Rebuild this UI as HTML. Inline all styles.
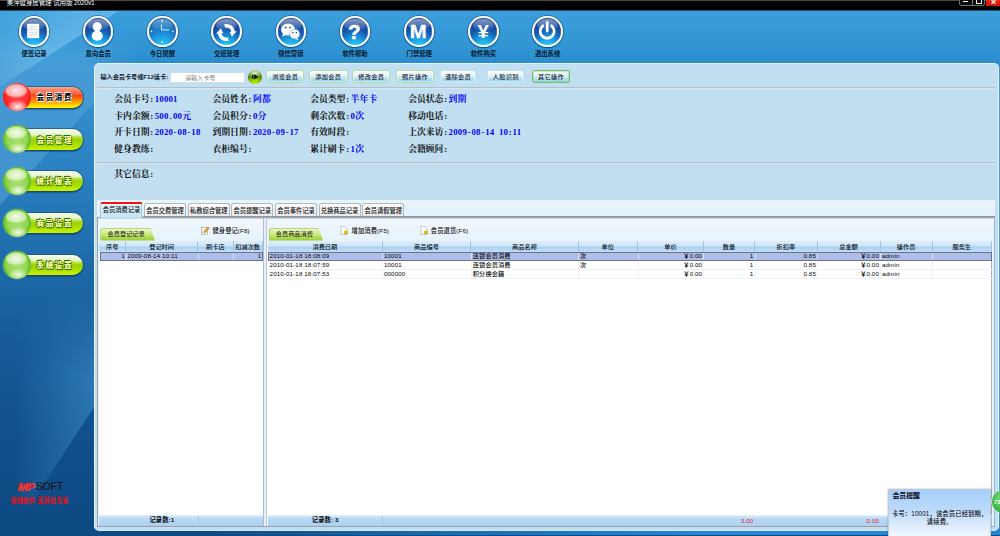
<!DOCTYPE html>
<html lang="zh-CN"><head><meta charset="utf-8"><title>美萍健身房管理 试用版 2020v1</title>
<style>
html,body{margin:0;padding:0}
body{width:1000px;height:536px;overflow:hidden;position:relative;background:#0e4a84;font-family:"Liberation Sans","Noto Sans CJK SC",sans-serif;font-size:6.25px;line-height:1;color:#000}
div,span{box-sizing:border-box}
.a{position:absolute;white-space:nowrap}
#title{left:0;top:0;width:1000px;height:11px;background:linear-gradient(#6a6a6a 0,#000 1.6px,#000 10px,#1b4d6e 10px)}
#tb{left:0;top:11px;width:1000px;height:52px;background:linear-gradient(#3c9fdc,#2f93d3 80%,#2a8ccc)}
#side{left:0;top:63px;width:102px;height:473px;background:linear-gradient(#3a94d2 0,#2b82c2 22%,#1c67a6 45%,#155a97 60%,#104f8a 80%,#0e4a84 100%)}
.ic{width:30.6px;height:30.6px;border-radius:50%;top:5.6px;background:radial-gradient(circle at 50% 102%,#30d2f8 0,#1ea2e6 26%,#1658b0 52%,#0f3888 80%,#0c2e7c 100%);box-shadow:inset 0 0 0 1.8px #fff,inset 0 0 0 2.4px rgba(255,255,255,.35),0 0 0 .7px rgba(8,50,110,.55),0 1px 1.5px rgba(0,30,80,.6)}
.ic:before{content:"";position:absolute;left:4.6px;right:4.6px;top:2.2px;height:11.4px;border-radius:50%/60% 60% 40% 40%;background:linear-gradient(rgba(255,255,255,.5),rgba(255,255,255,.06))}
.ic svg{position:absolute;left:.5px;top:.5px;width:28.4px;height:28.4px}
.il{top:39.6px;width:60px;text-align:center;color:#04162c;font-size:6.3px;font-weight:bold}
#panel{left:93.5px;top:62.8px;width:905px;height:468.6px;background:#c1dff1;border-radius:5px;border:1px solid #e8f4fb;border-bottom-color:#d4e9f7}
.sep{height:1px;background:#b4bfc9;box-shadow:0 1px 0 #d2e8f5}
.lb{font-family:"Liberation Serif","Noto Serif CJK SC",serif;font-weight:bold;font-size:8.8px;color:#101010}
.vl{font-family:"Liberation Serif","Noto Serif CJK SC",serif;font-weight:bold;font-size:8.8px;color:#0000fa;letter-spacing:.2px}
.p{display:inline-block;width:4.5px;text-align:center}
.btn{top:70px;height:13.3px;border-radius:2.5px;border:1px solid #b0e0a2;background:linear-gradient(#fbfefe 0,#e6f5fa 40%,#b6e0f3 70%,#92d3ef 100%);box-shadow:inset 0 0 0 .6px rgba(255,255,255,.75);text-align:center;line-height:11.6px;font-size:6.2px;font-weight:500;letter-spacing:.3px;color:#14222e}
.tab{top:203px;height:13.4px;width:42px;border:1px solid #b4b8bd;border-bottom:none;border-radius:2.5px 2.5px 0 0;background:linear-gradient(#fff,#f4f5f6 60%,#e6e8ea);text-align:center;line-height:13.4px;font-size:6.25px;color:#0c0c0c;font-weight:500}
.hd{top:240.6px;height:11px;background:linear-gradient(#deeefb,#cfe5f8 45%,#a9d0f1 55%,#c4e0f7);border-right:1px solid #9fc3e4;text-align:center;line-height:11.2px;font-size:6.2px;color:#06121e;font-weight:500}
.c{font-size:6.2px;color:#0a0a0a;font-weight:500;height:8.8px;line-height:8.8px}
.ft{top:514.6px;height:11.4px;background:linear-gradient(#e6f2fc 0,#bbdaf6 28%,#aad1f4 100%);line-height:11px;font-size:6.2px}
.stab{z-index:1;top:228.2px;height:12.4px;text-align:center;line-height:12.9px;font-size:6.2px;color:#111}
.stab:before{content:"";position:absolute;left:0;top:0;right:0;bottom:0;background:linear-gradient(#eaf6c0,#cbe882 45%,#a6d644 80%,#98cc34);border:1px solid #a4cc60;border-bottom:none;border-radius:3.5px 3px 0 0;clip-path:polygon(0 0,92% 0,100% 100%,0 100%);z-index:-1}
.pill{left:14px;width:69px;height:20.4px;border-radius:0 10.2px 10.2px 0;box-shadow:0 0 0 .7px rgba(16,80,120,.85),0 1.2px 1px 0.3px rgba(10,50,90,.8)}
.ball{left:3px;width:28.2px;height:28.2px;border-radius:50%}
.pt{left:34.8px;width:40px;text-align:center;font-weight:900;font-size:7.5px;letter-spacing:1.6px}
.tbt{font-size:6.25px;color:#080808;font-weight:500;letter-spacing:.12px}
</style></head><body>

<div id="title" class="a"></div>
<div class="a" style="left:6.8px;top:0.3px;color:#fff;font-size:6.5px;letter-spacing:-0.12px">美萍健身房管理 试用版 2020v1</div>
<div class="a" style="left:959px;top:-2px;width:26px;height:8.4px;border:0.8px solid #6e6e6e;border-radius:0 0 2px 2px;background:#0c0c0c"></div>
<div class="a" style="left:971.5px;top:0;width:0.7px;height:6px;background:#777"></div>
<div class="a" style="left:963px;top:1px;width:4.8px;height:1.3px;background:#fff"></div>
<div class="a" style="left:976px;top:-1px;width:6px;height:5.4px;border:1px solid #e8e8e8;border-radius:0.5px"></div>
<div class="a" style="left:986px;top:-1px;width:15px;height:6.8px;background:linear-gradient(#f02a1a,#d80f08);color:#fff;font-size:9.5px;font-weight:bold;text-align:center;line-height:5.4px">×</div>
<div id="tb" class="a"></div>
<div id="side" class="a"></div>
<div class="a" style="left:0;top:63px;width:94px;height:145px;background:linear-gradient(rgba(120,190,235,.18),rgba(120,190,235,.34));clip-path:polygon(0 0,100% 0,100% 40px,0 142px)"></div>
<div class="a" style="left:0;top:30px;width:140px;height:33px;background:linear-gradient(rgba(130,195,238,0),rgba(130,195,238,.3));-webkit-mask-image:linear-gradient(to right,#000 60%,transparent);mask-image:linear-gradient(to right,#000 60%,transparent)"></div>
<div class="a" style="left:0;top:11px;width:117.6px;height:76.4px;background:linear-gradient(to bottom right,rgba(150,215,245,.05) 0,rgba(140,210,245,.48) 49.6%,rgba(255,255,255,0) 50.4%);-webkit-mask-image:linear-gradient(to top right,rgba(0,0,0,.35),#000 45%);mask-image:linear-gradient(to top right,rgba(0,0,0,.35),#000 45%)"></div>
<div class="a" style="left:0;top:290px;width:94px;height:215px;background:linear-gradient(to right,rgba(70,150,205,0) 15%,rgba(70,155,210,.5) 100%);clip-path:polygon(0 0,100% 0,100% 117px,32% 215px,0 215px);-webkit-mask-image:linear-gradient(transparent,#000 40%);mask-image:linear-gradient(transparent,#000 40%)"></div>
<div class="a ic" style="left:18.7px;top:16.4px"><svg viewBox="0 0 28.4 28.4"><rect x="8.2" y="6.8" width="12" height="14.4" fill="#fff"/><path d="M10 10h8.4M10 12.6h8.4M10 15.2h8.4M10 17.8h8.4" stroke="#c2cedc" stroke-width=".8"/></svg></div>
<div class="a il" style="left:4.0px;top:50.7px">便签记录</div>
<div class="a ic" style="left:82.9px;top:16.4px"><svg viewBox="0 0 28.4 28.4"><circle cx="14.2" cy="9.8" r="4.5" fill="#fff"/><ellipse cx="14.2" cy="18.8" rx="5.5" ry="5" fill="#fff"/></svg></div>
<div class="a il" style="left:68.2px;top:50.7px">意向会员</div>
<div class="a ic" style="left:147.1px;top:16.4px"><svg viewBox="0 0 28.4 28.4"><circle cx="14.2" cy="14.4" r="12.6" fill="#28b4ee" opacity=".38"/><path d="M13.4 7.4v5.6h8" stroke="#c4f4fc" stroke-width="1" fill="none"/><rect x="13.6" y="2.6" width="1.1" height="2.4" fill="#e8fbff"/><circle cx="14.2" cy="25.2" r=".9" fill="#e8fbff"/><circle cx="3.5" cy="14.4" r=".8" fill="#e8fbff"/><circle cx="24.9" cy="14.4" r=".8" fill="#e8fbff"/></svg></div>
<div class="a il" style="left:132.4px;top:50.7px">今日提醒</div>
<div class="a ic" style="left:211.3px;top:16.4px"><svg viewBox="0 0 28.4 28.4"><g transform="translate(.2 1.1)"><path d="M12.44 7.83A6.8 6.8 0 0 1 20.97 13.81" stroke="#fff" stroke-width="3.5" fill="none"/><path d="M15.96 20.97A6.8 6.8 0 0 1 7.43 14.99" stroke="#fff" stroke-width="3.5" fill="none"/><path d="M19.77 18.6L17.3 13.6 24.6 13.2z" fill="#fff"/><path d="M8.63 10.2L11.1 15.2 3.8 15.6z" fill="#fff"/></g></svg></div>
<div class="a il" style="left:196.6px;top:50.7px">交班管理</div>
<div class="a ic" style="left:275.5px;top:16.4px"><svg viewBox="0 0 28.4 28.4"><ellipse cx="12" cy="12.4" rx="7" ry="6" fill="#fff"/><path d="M7.4 16.2l-1.4 3.6 4.6-2z" fill="#fff"/><ellipse cx="18.7" cy="17" rx="5.1" ry="4.8" fill="#fff" stroke="#5a94d4" stroke-width=".5"/><path d="M20.8 20.8l1.8 2.2-3.8-1z" fill="#fff"/><circle cx="9.8" cy="10.6" r=".85" fill="#1c3c78"/><circle cx="14" cy="10.6" r=".85" fill="#1c3c78"/><circle cx="16.9" cy="15.4" r=".75" fill="#1c3c78"/><circle cx="20.4" cy="15.4" r=".75" fill="#1c3c78"/></svg></div>
<div class="a il" style="left:260.8px;top:50.7px">微信营销</div>
<div class="a ic" style="left:339.7px;top:16.4px"><svg viewBox="0 0 28.4 28.4"><text x="14.2" y="21.6" font-family="Liberation Sans,sans-serif" font-weight="bold" font-size="20.5" fill="#fff" stroke="#fff" stroke-width=".5" text-anchor="middle">?</text></svg></div>
<div class="a il" style="left:325.0px;top:50.7px">软件帮助</div>
<div class="a ic" style="left:403.9px;top:16.4px"><svg viewBox="0 0 28.4 28.4"><text transform="translate(14.2 20.6) scale(1.16 1)" font-family="Liberation Sans,sans-serif" font-weight="bold" font-size="17.5" fill="#fff" stroke="#fff" stroke-width=".3" text-anchor="middle">M</text></svg></div>
<div class="a il" style="left:389.2px;top:50.7px">门禁管理</div>
<div class="a ic" style="left:468.1px;top:16.4px"><svg viewBox="0 0 28.4 28.4"><text transform="translate(14.2 21) scale(1.1 1)" font-family="Liberation Sans,sans-serif" font-weight="bold" font-size="18.5" fill="#fff" text-anchor="middle">¥</text></svg></div>
<div class="a il" style="left:453.4px;top:50.7px">软件购买</div>
<div class="a ic" style="left:532.3px;top:16.4px"><svg viewBox="0 0 28.4 28.4"><path d="M9.8 8.8a7 7 0 1 0 8.8 0" stroke="#fff" stroke-width="2.8" fill="none" stroke-linecap="round"/><path d="M14.2 5.6v8.4" stroke="#fff" stroke-width="2.8" stroke-linecap="round"/></svg></div>
<div class="a il" style="left:517.6px;top:50.7px">退出系统</div>
<div class="a pill" style="top:87.2px;background:linear-gradient(#f6a892 0,#ff8e70 10%,#fb6c4a 30%,#f04a16 38%,#f76410 52%,#ffa000 70%,#ffdc00 88%,#fff200 100%)"></div>
<div class="a ball" style="top:83.0px;background:radial-gradient(ellipse 40% 25% at 52% 85%,rgba(255,248,248,.96) 0,rgba(255,190,190,.6) 60%,rgba(255,80,80,0) 100%),radial-gradient(ellipse 44% 27% at 47% 27%,rgba(255,238,238,.95) 0,rgba(255,196,196,.85) 75%,rgba(255,120,120,0) 100%),radial-gradient(circle at 50% 50%,#ff4444 0,#ff3030 50%,#ff1212 72%,#f80404 86%,#c80000 100%);box-shadow:0 0 1.2px .2px rgba(110,200,240,.7)"></div>
<div class="a pt" style="top:94.3px;color:#0a0a0a;text-shadow:0 0 1px #fff,0 0 1px #fff,0 0 1.5px #fff,0.6px 0.6px 0 #fff,-0.6px -0.6px 0 #fff">会员消费</div>
<div class="a pill" style="top:129.4px;background:linear-gradient(#f6fbea 0,#e6f5c8 28%,#bde350 37%,#9ad402 50%,#a6dc00 70%,#ccf200 100%)"></div>
<div class="a ball" style="top:125.2px;background:radial-gradient(ellipse 38% 23% at 54% 85%,rgba(255,255,255,.88) 0,rgba(222,246,198,.5) 60%,rgba(160,220,100,0) 100%),radial-gradient(ellipse 42% 25% at 47% 27%,rgba(255,255,255,.88) 0,rgba(226,246,204,.72) 75%,rgba(180,230,130,0) 100%),radial-gradient(circle at 50% 50%,#a8e074 0,#96d655 50%,#5cba10 72%,#44a400 86%,#2a8600 100%);box-shadow:0 0 1.2px .2px rgba(110,200,240,.7)"></div>
<div class="a pt" style="top:136.5px;color:#ffffa0;text-shadow:0 0 1px #2c6a08,0 0 1px #2c6a08,0 0 1.5px #2c6a08,0.6px 0.6px 0 #2c6a08,-0.6px -0.6px 0 #2c6a08">会员管理</div>
<div class="a pill" style="top:171.1px;background:linear-gradient(#f6fbea 0,#e6f5c8 28%,#bde350 37%,#9ad402 50%,#a6dc00 70%,#ccf200 100%)"></div>
<div class="a ball" style="top:166.9px;background:radial-gradient(ellipse 38% 23% at 54% 85%,rgba(255,255,255,.88) 0,rgba(222,246,198,.5) 60%,rgba(160,220,100,0) 100%),radial-gradient(ellipse 42% 25% at 47% 27%,rgba(255,255,255,.88) 0,rgba(226,246,204,.72) 75%,rgba(180,230,130,0) 100%),radial-gradient(circle at 50% 50%,#a8e074 0,#96d655 50%,#5cba10 72%,#44a400 86%,#2a8600 100%);box-shadow:0 0 1.2px .2px rgba(110,200,240,.7)"></div>
<div class="a pt" style="top:178.2px;color:#ffffa0;text-shadow:0 0 1px #2c6a08,0 0 1px #2c6a08,0 0 1.5px #2c6a08,0.6px 0.6px 0 #2c6a08,-0.6px -0.6px 0 #2c6a08">统计报表</div>
<div class="a pill" style="top:212.9px;background:linear-gradient(#f6fbea 0,#e6f5c8 28%,#bde350 37%,#9ad402 50%,#a6dc00 70%,#ccf200 100%)"></div>
<div class="a ball" style="top:208.7px;background:radial-gradient(ellipse 38% 23% at 54% 85%,rgba(255,255,255,.88) 0,rgba(222,246,198,.5) 60%,rgba(160,220,100,0) 100%),radial-gradient(ellipse 42% 25% at 47% 27%,rgba(255,255,255,.88) 0,rgba(226,246,204,.72) 75%,rgba(180,230,130,0) 100%),radial-gradient(circle at 50% 50%,#a8e074 0,#96d655 50%,#5cba10 72%,#44a400 86%,#2a8600 100%);box-shadow:0 0 1.2px .2px rgba(110,200,240,.7)"></div>
<div class="a pt" style="top:220.0px;color:#ffffa0;text-shadow:0 0 1px #2c6a08,0 0 1px #2c6a08,0 0 1.5px #2c6a08,0.6px 0.6px 0 #2c6a08,-0.6px -0.6px 0 #2c6a08">商品设置</div>
<div class="a pill" style="top:254.7px;background:linear-gradient(#f6fbea 0,#e6f5c8 28%,#bde350 37%,#9ad402 50%,#a6dc00 70%,#ccf200 100%)"></div>
<div class="a ball" style="top:250.5px;background:radial-gradient(ellipse 38% 23% at 54% 85%,rgba(255,255,255,.88) 0,rgba(222,246,198,.5) 60%,rgba(160,220,100,0) 100%),radial-gradient(ellipse 42% 25% at 47% 27%,rgba(255,255,255,.88) 0,rgba(226,246,204,.72) 75%,rgba(180,230,130,0) 100%),radial-gradient(circle at 50% 50%,#a8e074 0,#96d655 50%,#5cba10 72%,#44a400 86%,#2a8600 100%);box-shadow:0 0 1.2px .2px rgba(110,200,240,.7)"></div>
<div class="a pt" style="top:261.8px;color:#ffffa0;text-shadow:0 0 1px #2c6a08,0 0 1px #2c6a08,0 0 1.5px #2c6a08,0.6px 0.6px 0 #2c6a08,-0.6px -0.6px 0 #2c6a08">系统设置</div>
<div class="a" style="left:17.8px;top:480.6px;font-weight:bold;font-style:italic;font-size:11.6px;letter-spacing:-0.5px;color:#f21a10;text-shadow:0 -0.3px .4px #ffb0a0,.3px 0 0 #f21a10">MP</div>
<div class="a" style="left:35.8px;top:481.5px;font-size:10.4px;letter-spacing:-0.12px;color:#120c0c">SOFT</div>
<div class="a" style="left:10.6px;top:497.9px;font-size:6.25px;color:#f40c0c;font-weight:bold">管理软件 美萍是专家</div>
<div class="a" style="left:990px;top:63px;width:10px;height:470px;background:linear-gradient(#2f90d0,#4a9fd8 8%,#4a9fd8 90%,#2a84c8)"></div>
<div id="panel" class="a"></div>
<div class="a tbt" style="left:100.4px;top:73.6px;font-weight:bold;font-size:6.2px;letter-spacing:-0.05px;color:#14202c">输入会员卡号或F12读卡:</div>
<div class="a" style="left:170.3px;top:71.6px;width:75px;height:11.2px;background:#fff;border:1px solid #c9dfee;padding-left:13.6px;line-height:9.6px;font-size:6.1px;color:#7c7c7c">请输入卡号</div>
<div class="a" style="left:248.3px;top:69.9px;width:13.7px;height:13.7px;border-radius:50%;background:radial-gradient(ellipse 62% 36% at 50% 20%,rgba(255,255,255,.85) 0,rgba(255,255,255,.25) 70%,rgba(255,255,255,0) 100%),radial-gradient(circle at 50% 96%,#b8f200 0,#90cc00 30%,#55800a 58%,#5c8a0c 75%,#86b41c 92%,#6e9c14 100%)"><svg viewBox="0 0 13.7 13.7" style="position:absolute;left:0;top:0;width:13.7px;height:13.7px"><path d="M4 4.9h1.5v3.9H4zM6.2 4.2l4.4 2.7-4.4 2.7z" fill="#0a1000"/></svg></div>
<div class="a btn" style="left:266px;width:38.4px;">浏览会员</div>
<div class="a btn" style="left:309px;width:38.5px;">添加会员</div>
<div class="a btn" style="left:352px;width:38.3px;">修改会员</div>
<div class="a btn" style="left:395.7px;width:38.5px;">照片操作</div>
<div class="a btn" style="left:439.6px;width:36.9px;border-color:#c6e4f0;">清除会员</div>
<div class="a btn" style="left:487.3px;width:36.9px;border-color:#c6e4f0;">人脸识别</div>
<div class="a btn" style="left:532px;width:38.0px;border-color:#6fbf6a;box-shadow:inset 0 0 0 .6px #9bd894;">其它操作</div>
<div class="a sep" style="left:97px;top:87.2px;width:898px"></div>
<div class="a sep" style="left:97px;top:161.6px;width:898px"></div>
<div class="a lb" style="left:114.3px;top:95.0px">会员卡号<span class="p">:</span></div>
<div class="a vl" style="left:154.7px;top:95.0px">10001</div>
<div class="a lb" style="left:212.5px;top:95.0px">会员姓名<span class="p">:</span></div>
<div class="a vl" style="left:252.9px;top:95.0px">阿都</div>
<div class="a lb" style="left:310.2px;top:95.0px">会员类型<span class="p">:</span></div>
<div class="a vl" style="left:350.6px;top:95.0px">半年卡</div>
<div class="a lb" style="left:408.2px;top:95.0px">会员状态<span class="p">:</span></div>
<div class="a vl" style="left:448.6px;top:95.0px">到期</div>
<div class="a lb" style="left:114.3px;top:111.5px">卡内余额<span class="p">:</span></div>
<div class="a vl" style="left:154.7px;top:111.5px">500<span class="p">.</span>00元</div>
<div class="a lb" style="left:212.5px;top:111.5px">会员积分<span class="p">:</span></div>
<div class="a vl" style="left:252.9px;top:111.5px">0分</div>
<div class="a lb" style="left:310.2px;top:111.5px">剩余次数<span class="p">:</span></div>
<div class="a vl" style="left:350.6px;top:111.5px">0次</div>
<div class="a lb" style="left:408.2px;top:111.5px">移动电话<span class="p">:</span></div>
<div class="a lb" style="left:114.3px;top:128.1px">开卡日期<span class="p">:</span></div>
<div class="a vl" style="left:154.7px;top:128.1px">2020<span class="p">-</span>08<span class="p">-</span>18</div>
<div class="a lb" style="left:212.5px;top:128.1px">到期日期<span class="p">:</span></div>
<div class="a vl" style="left:252.9px;top:128.1px">2020<span class="p">-</span>09<span class="p">-</span>17</div>
<div class="a lb" style="left:310.2px;top:128.1px">有效时段<span class="p">:</span></div>
<div class="a lb" style="left:408.2px;top:128.1px">上次来访<span class="p">:</span></div>
<div class="a vl" style="left:448.6px;top:128.1px">2009<span class="p">-</span>08<span class="p">-</span>14<span class="p"> </span>10<span class="p">:</span>11</div>
<div class="a lb" style="left:114.3px;top:144.7px">健身教练<span class="p">:</span></div>
<div class="a lb" style="left:212.5px;top:144.7px">衣柜编号<span class="p">:</span></div>
<div class="a lb" style="left:310.2px;top:144.7px">累计刷卡<span class="p">:</span></div>
<div class="a vl" style="left:350.6px;top:144.7px">1次</div>
<div class="a lb" style="left:408.2px;top:144.7px">会籍顾问<span class="p">:</span></div>
<div class="a lb" style="left:114.3px;top:170.3px">其它信息<span class="p">:</span></div>
<div class="a" style="left:97.4px;top:200px;width:897.4px;height:17px;background:linear-gradient(#eaf5fc,#e1f0fa)"></div>
<div class="a tab" style="left:100.4px;top:202px;height:16px;border-color:#a4c4d8;background:linear-gradient(#eef8fd,#d3ecf9 50%,#bfe3f6);line-height:13.8px;z-index:3">会员消费记录</div>
<div class="a tab" style="left:144.1px">会员交费管理</div>
<div class="a tab" style="left:187.7px">私教综合管理</div>
<div class="a tab" style="left:231.3px">会员提醒记录</div>
<div class="a tab" style="left:275.0px">会员事件记录</div>
<div class="a tab" style="left:318.6px">兑换商品记录</div>
<div class="a tab" style="left:362.3px">会员请假管理</div>
<div class="a" style="left:100.6px;top:201.9px;width:41.8px;height:2.1px;border-radius:1.2px 1.2px 0 0;background:#f01616;z-index:4"></div>
<div class="a" style="left:97.4px;top:216.8px;width:897.4px;height:310.6px;border:1px solid #9aa4ae;border-right-color:#8fb6dc;border-bottom:1.2px solid #a29ea6;background:linear-gradient(#f2f8fd 0,#e6f2fb 24px,#e6f2fb 100%);box-shadow:inset 0 1px 0 #cfd6dc"></div>
<div class="a" style="left:142.6px;top:215.9px;width:852px;height:1.5px;background:#96999d"></div>
<div class="a" style="left:98.6px;top:240.6px;width:164.4px;height:285.4px;background:#fff"></div>
<div class="a" style="left:262.8px;top:218px;width:4.6px;height:308px;background:#e6eef9;border-left:1.2px solid #a9bbdc;border-right:.7px solid #bcc5d2"></div>
<div class="a" style="left:267.4px;top:240.6px;width:725.1px;height:285.4px;background:#fff;border-right:1px solid #a9b0bb"></div>
<div class="a stab" style="left:100.4px;width:54.5px;padding-right:3px">会员登记记录</div>
<div class="a stab" style="left:268.6px;width:54.5px;padding-right:3px">会员商品消费</div>
<svg class="a" style="left:201.4px;top:226px;width:8.8px;height:8.8px" viewBox="0 0 8 8"><rect x=".6" y="1.4" width="5.4" height="6" fill="#fdfdf4" stroke="#8a8a80" stroke-width=".5"/><path d="M2.4 6.2l.5-1.7 3.4-3.6 1.2 1.1-3.4 3.6z" fill="#f0b020" stroke="#7a4a10" stroke-width=".4"/></svg>
<div class="a tbt" style="left:212.4px;top:227.8px">健身登记(F8)</div>
<svg class="a" style="left:340px;top:226.4px;width:8.6px;height:9px" viewBox="0 0 8.6 9"><path d="M.8.5h4.4l1.8 1.8v6.2H.8z" fill="#fdfdfd" stroke="#9a9a9a" stroke-width=".5"/><circle cx="5.9" cy="6.6" r="1.9" fill="#e8c020" stroke="#a88408" stroke-width=".3"/></svg>
<div class="a tbt" style="left:351.6px;top:227.8px">增加消费(F5)</div>
<svg class="a" style="left:420px;top:226.4px;width:8.6px;height:9px" viewBox="0 0 8.6 9"><path d="M.8.5h4.4l1.8 1.8v6.2H.8z" fill="#fdfdfd" stroke="#9a9a9a" stroke-width=".5"/><circle cx="5.9" cy="6.6" r="1.9" fill="#e8c020" stroke="#a88408" stroke-width=".3"/></svg>
<div class="a tbt" style="left:430.8px;top:227.8px">会员退货(F6)</div>
<div class="a hd" style="left:99.4px;width:26.8px">序号</div>
<div class="a hd" style="left:126.2px;width:71.8px">登记时间</div>
<div class="a hd" style="left:198px;width:35.8px">刷卡店</div>
<div class="a hd" style="left:233.8px;width:28.8px">扣减次数</div>
<div class="a" style="left:99.6px;top:251.8px;width:163px;height:8.8px;background:#aebdea;border:1px solid #6c7484"></div>
<div class="a" style="left:125.7px;top:252.6px;width:.8px;height:7.2px;background:#d6def4"></div>
<div class="a" style="left:197.5px;top:252.6px;width:.8px;height:7.2px;background:#d6def4"></div>
<div class="a" style="left:233.3px;top:252.6px;width:.8px;height:7.2px;background:#d6def4"></div>
<div class="a c" style="left:99.4px;width:25.6px;top:251.8px;text-align:right">1</div>
<div class="a c" style="left:127.4px;top:251.8px;letter-spacing:.12px">2009-08-14 10:11</div>
<div class="a c" style="left:233.8px;width:27.4px;top:251.8px;text-align:right">1</div>
<div class="a hd" style="left:268.2px;width:114.4px">消费日期</div>
<div class="a hd" style="left:382.6px;width:88.8px">商品编号</div>
<div class="a hd" style="left:471.4px;width:107.2px">商品名称</div>
<div class="a hd" style="left:578.6px;width:59.4px">单位</div>
<div class="a hd" style="left:638px;width:65.8px">单价</div>
<div class="a hd" style="left:703.8px;width:51.2px">数量</div>
<div class="a hd" style="left:755px;width:62.6px">折扣率</div>
<div class="a hd" style="left:817.6px;width:63.0px">总金额</div>
<div class="a hd" style="left:880.6px;width:52.0px">操作员</div>
<div class="a hd" style="left:932.6px;width:59.4px">服务生</div>
<div class="a" style="left:268.2px;top:251.8px;width:724px;height:8.8px;background:#aebdea;border:1px solid #6c7484"></div>
<div class="a c" style="left:269.6px;top:251.80px;letter-spacing:.12px">2010-01-18 18:08:09</div>
<div class="a" style="left:382.1px;top:252.6px;width:.8px;height:7.2px;background:#d6def4"></div>
<div class="a c" style="left:384.0px;top:251.80px;letter-spacing:.12px">10001</div>
<div class="a" style="left:470.9px;top:252.6px;width:.8px;height:7.2px;background:#d6def4"></div>
<div class="a c" style="left:472.8px;top:251.80px;letter-spacing:.12px">连锁会员消费</div>
<div class="a" style="left:578.1px;top:252.6px;width:.8px;height:7.2px;background:#d6def4"></div>
<div class="a c" style="left:580.0px;top:251.80px;letter-spacing:.12px">次</div>
<div class="a" style="left:637.5px;top:252.6px;width:.8px;height:7.2px;background:#d6def4"></div>
<div class="a c" style="left:638.0px;width:64.2px;top:251.80px;text-align:right;letter-spacing:.12px"><b>￥</b>0.00</div>
<div class="a" style="left:703.3px;top:252.6px;width:.8px;height:7.2px;background:#d6def4"></div>
<div class="a c" style="left:703.8px;width:49.6px;top:251.80px;text-align:right;letter-spacing:.12px">1</div>
<div class="a" style="left:754.5px;top:252.6px;width:.8px;height:7.2px;background:#d6def4"></div>
<div class="a c" style="left:755.0px;width:61.0px;top:251.80px;text-align:right;letter-spacing:.12px">0.85</div>
<div class="a" style="left:817.1px;top:252.6px;width:.8px;height:7.2px;background:#d6def4"></div>
<div class="a c" style="left:817.6px;width:61.4px;top:251.80px;text-align:right;letter-spacing:.12px"><b>￥</b>0.00</div>
<div class="a" style="left:880.1px;top:252.6px;width:.8px;height:7.2px;background:#d6def4"></div>
<div class="a c" style="left:882.0px;top:251.80px;letter-spacing:.12px">admin</div>
<div class="a" style="left:932.1px;top:252.6px;width:.8px;height:7.2px;background:#d6def4"></div>
<div class="a" style="left:268.2px;top:269.15px;width:724px;height:.7px;background:#edf2f8"></div>
<div class="a c" style="left:269.6px;top:260.65px;letter-spacing:.12px">2010-01-18 18:07:59</div>
<div class="a" style="left:382.2px;top:261.05px;width:.7px;height:8.6px;background:#edf2f8"></div>
<div class="a c" style="left:384.0px;top:260.65px;letter-spacing:.12px">10001</div>
<div class="a" style="left:471.0px;top:261.05px;width:.7px;height:8.6px;background:#edf2f8"></div>
<div class="a c" style="left:472.8px;top:260.65px;letter-spacing:.12px">连锁会员消费</div>
<div class="a" style="left:578.2px;top:261.05px;width:.7px;height:8.6px;background:#edf2f8"></div>
<div class="a c" style="left:580.0px;top:260.65px;letter-spacing:.12px">次</div>
<div class="a" style="left:637.6px;top:261.05px;width:.7px;height:8.6px;background:#edf2f8"></div>
<div class="a c" style="left:638.0px;width:64.2px;top:260.65px;text-align:right;letter-spacing:.12px"><b>￥</b>0.00</div>
<div class="a" style="left:703.4px;top:261.05px;width:.7px;height:8.6px;background:#edf2f8"></div>
<div class="a c" style="left:703.8px;width:49.6px;top:260.65px;text-align:right;letter-spacing:.12px">1</div>
<div class="a" style="left:754.6px;top:261.05px;width:.7px;height:8.6px;background:#edf2f8"></div>
<div class="a c" style="left:755.0px;width:61.0px;top:260.65px;text-align:right;letter-spacing:.12px">0.85</div>
<div class="a" style="left:817.2px;top:261.05px;width:.7px;height:8.6px;background:#edf2f8"></div>
<div class="a c" style="left:817.6px;width:61.4px;top:260.65px;text-align:right;letter-spacing:.12px"><b>￥</b>0.00</div>
<div class="a" style="left:880.2px;top:261.05px;width:.7px;height:8.6px;background:#edf2f8"></div>
<div class="a c" style="left:882.0px;top:260.65px;letter-spacing:.12px">admin</div>
<div class="a" style="left:932.2px;top:261.05px;width:.7px;height:8.6px;background:#edf2f8"></div>
<div class="a" style="left:268.2px;top:278.00px;width:724px;height:.7px;background:#edf2f8"></div>
<div class="a c" style="left:269.6px;top:269.50px;letter-spacing:.12px">2010-01-18 18:07:53</div>
<div class="a" style="left:382.2px;top:269.90px;width:.7px;height:8.6px;background:#edf2f8"></div>
<div class="a c" style="left:384.0px;top:269.50px;letter-spacing:.12px">000000</div>
<div class="a" style="left:471.0px;top:269.90px;width:.7px;height:8.6px;background:#edf2f8"></div>
<div class="a c" style="left:472.8px;top:269.50px;letter-spacing:.12px">积分换会籍</div>
<div class="a" style="left:578.2px;top:269.90px;width:.7px;height:8.6px;background:#edf2f8"></div>
<div class="a" style="left:637.6px;top:269.90px;width:.7px;height:8.6px;background:#edf2f8"></div>
<div class="a c" style="left:638.0px;width:64.2px;top:269.50px;text-align:right;letter-spacing:.12px"><b>￥</b>0.00</div>
<div class="a" style="left:703.4px;top:269.90px;width:.7px;height:8.6px;background:#edf2f8"></div>
<div class="a c" style="left:703.8px;width:49.6px;top:269.50px;text-align:right;letter-spacing:.12px">1</div>
<div class="a" style="left:754.6px;top:269.90px;width:.7px;height:8.6px;background:#edf2f8"></div>
<div class="a c" style="left:755.0px;width:61.0px;top:269.50px;text-align:right;letter-spacing:.12px">0.85</div>
<div class="a" style="left:817.2px;top:269.90px;width:.7px;height:8.6px;background:#edf2f8"></div>
<div class="a c" style="left:817.6px;width:61.4px;top:269.50px;text-align:right;letter-spacing:.12px"><b>￥</b>0.00</div>
<div class="a" style="left:880.2px;top:269.90px;width:.7px;height:8.6px;background:#edf2f8"></div>
<div class="a c" style="left:882.0px;top:269.50px;letter-spacing:.12px">admin</div>
<div class="a" style="left:932.2px;top:269.90px;width:.7px;height:8.6px;background:#edf2f8"></div>
<div class="a ft" style="left:99.4px;width:163.4px"></div>
<div class="a ft" style="left:268.2px;width:724px"></div>
<div class="a" style="left:197.6px;top:516.4px;width:.7px;height:8px;background:#a8c8e8"></div>
<div class="a" style="left:382.4px;top:516.4px;width:.7px;height:8px;background:#a8c8e8"></div>
<div class="a tbt" style="left:99.4px;width:125px;top:517.4px;text-align:center;font-weight:bold">记录数:1</div>
<div class="a tbt" style="left:268.2px;width:114px;top:517.4px;text-align:center;font-weight:bold">记录数: 3</div>
<div class="a tbt" style="left:703.8px;width:49.6px;top:517.6px;text-align:right;color:#f0182c">3.00</div>
<div class="a tbt" style="left:817.6px;width:61.6px;top:517.6px;text-align:right;color:#f0182c">0.00</div>
<div class="a" style="left:200px;top:531.3px;width:800px;height:3.6px;background:linear-gradient(to right,rgba(34,134,210,0),rgba(34,134,210,.55) 30%,#2286d2 62%)"></div>
<div class="a" style="left:888px;top:488.8px;width:103.4px;height:50px;background:linear-gradient(#a4cef9 0,#bbdafa 40%,#dcebfc 75%,#f4f9ff 100%);border:1px solid #c3ccd6;box-shadow:0 0 1.5px rgba(60,70,90,.5)"></div>
<div class="a" style="left:892.4px;top:492.6px;font-weight:bold;font-size:6.9px;color:#0a0a14">会员提醒</div>
<div class="a" style="left:888px;width:103.4px;top:509.9px;text-align:center;font-size:6.3px;line-height:7.8px;white-space:normal;color:#0a0a0a;font-weight:500;letter-spacing:.14px">卡号：10001，该会员已经到期，<br>请续费。</div>
<div class="a" style="left:992.4px;top:490.4px;width:22.6px;height:22.6px;border-radius:50%;background:radial-gradient(circle at 45% 35%,#7be07a,#3cb84a 60%,#259a3a);box-shadow:0 0 0 .6px #e6f6e6;color:#fff;font-size:6px;font-style:italic;font-weight:bold;line-height:25px;padding-left:1.6px">71</div>
</body></html>
